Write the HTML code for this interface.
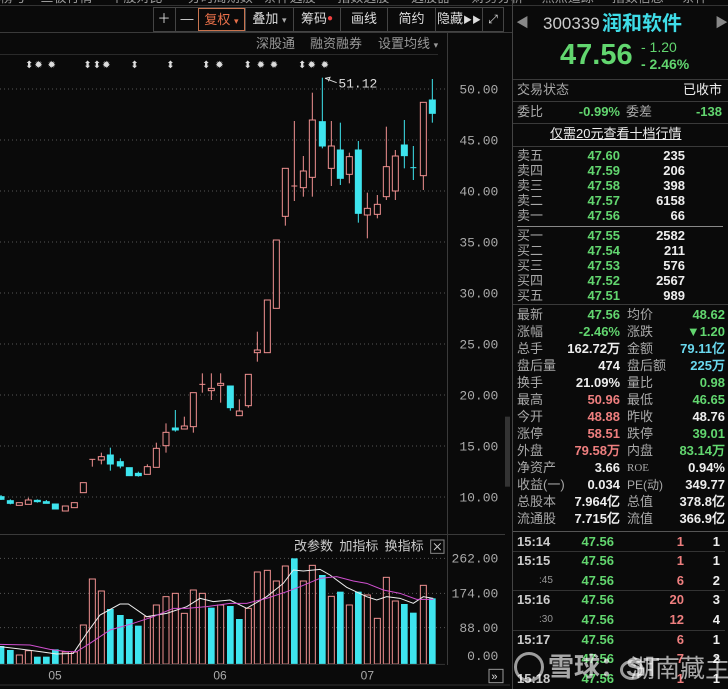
<!DOCTYPE html>
<html><head><meta charset="utf-8"><style>
*{margin:0;padding:0;box-sizing:border-box}
body{width:728px;height:689px;background:#0a0a0a;overflow:hidden;position:relative;font-family:"Liberation Sans","Noto Sans CJK SC",sans-serif;color:#ccc}
.a{position:absolute;white-space:nowrap;line-height:16px;height:16px}
.l{font-size:13px;color:#a8a8a8}
.n{font-size:13px;font-weight:bold;font-family:"Liberation Sans",sans-serif}
.g{color:#62d66f}.rd{color:#ef7f7f}.w{color:#eee}.cy{color:#6ad8ee}
.hl{position:absolute;height:1px;background:#3a3a3a}
.btn{position:absolute;top:8px;height:23px;line-height:22px;font-size:13px;color:#ddd;text-align:center;border-left:1px solid #444}
</style></head><body>
<!-- top cut menu -->
<div class="a" style="top:-10px;left:0;font-size:13px;color:#999">榜号 &nbsp;&nbsp; 三板行情 &nbsp;&nbsp;&nbsp; 个股对比 &nbsp;&nbsp;&nbsp;&nbsp;&nbsp; 分时周期数 &nbsp; 条件选股 &nbsp;&nbsp;&nbsp;&nbsp; 指数选股 &nbsp;&nbsp;&nbsp;&nbsp; 选股器 &nbsp;&nbsp;&nbsp;&nbsp; 财务分析 &nbsp;&nbsp;&nbsp; 热点追踪 &nbsp;&nbsp;&nbsp; 指数信息 &nbsp;&nbsp;&nbsp; 条件</div>
<div class="hl" style="top:5px;left:0;width:728px;background:#333"></div>
<!-- toolbar -->
<div style="position:absolute;left:153px;top:7px;width:351px;height:25px;border:1px solid #444"></div>
<div class="btn" style="left:153px;width:22px;border-left:none">＋</div>
<div class="btn" style="left:175px;width:23px">—</div>
<div class="btn" style="left:198px;width:47px;border:1px solid #c8744f;color:#e8704a">复权 <span style="font-size:9px">▾</span></div>
<div class="btn" style="left:245px;width:48px">叠加 <span style="font-size:9px;color:#aaa">▾</span></div>
<div class="btn" style="left:293px;width:47px">筹码<span style="color:#f04040;font-size:10px;vertical-align:top">●</span></div>
<div class="btn" style="left:340px;width:47px">画线</div>
<div class="btn" style="left:387px;width:48px">简约</div>
<div class="btn" style="left:435px;width:47px">隐藏<span style="font-size:9px">▶▶</span></div>
<div class="btn" style="left:482px;width:21px;font-size:12px">⤢</div>
<div class="hl" style="top:32px;left:0;width:512px"></div>
<div class="a l" style="top:36px;left:256px;color:#999">深股通</div>
<div class="a l" style="top:36px;left:310px;color:#999">融资融券</div>
<div class="a l" style="top:36px;left:378px;color:#999">设置均线 <span style="font-size:9px">▾</span></div>
<div class="hl" style="top:54px;left:0;width:438px;background:#2a2a2a"></div>
<div class="a" style="top:58px;left:25px;font-size:10px;color:#ddd;letter-spacing:1px">⬍✹ ✹ &nbsp;&nbsp;&nbsp;&nbsp;&nbsp;&nbsp;⬍⬍✹ &nbsp;&nbsp;&nbsp;&nbsp;⬍ &nbsp;&nbsp;&nbsp;&nbsp;&nbsp;&nbsp;⬍ &nbsp;&nbsp;&nbsp;&nbsp;&nbsp;&nbsp;⬍ ✹ &nbsp;&nbsp;&nbsp;&nbsp;⬍ ✹ ✹ &nbsp;&nbsp;&nbsp;&nbsp;⬍✹ ✹</div>
<!-- price chart -->
<svg style="position:absolute;left:0;top:60px" width="510" height="474" viewBox="0 0 1530 1422">
<g stroke="#555" stroke-width="3" stroke-dasharray="3 9">
<line x1="0" y1="87" x2="1335" y2="87"/><line x1="0" y1="240" x2="1335" y2="240"/><line x1="0" y1="393" x2="1335" y2="393"/><line x1="0" y1="546" x2="1335" y2="546"/><line x1="0" y1="699" x2="1335" y2="699"/><line x1="0" y1="852" x2="1335" y2="852"/><line x1="0" y1="1005" x2="1335" y2="1005"/><line x1="0" y1="1158" x2="1335" y2="1158"/><line x1="0" y1="1311" x2="1335" y2="1311"/>
</g>
<g fill="#aaa" font-size="39" font-family="Liberation Mono,monospace" text-anchor="end">
<text x="1495" y="100">50.00</text><text x="1495" y="253">45.00</text><text x="1495" y="406">40.00</text><text x="1495" y="559">35.00</text><text x="1495" y="712">30.00</text><text x="1495" y="865">25.00</text><text x="1495" y="1018">20.00</text><text x="1495" y="1171">15.00</text><text x="1495" y="1324">10.00</text>
</g>
<rect x="1515" y="1070" width="15" height="210" fill="#333"/>
<g stroke="#ddd" stroke-width="3" fill="none"><polyline points="975,55 1010,68"/><polyline points="975,55 990,52 985,64"/></g>
<text x="1015" y="83" fill="#ddd" font-size="39" font-family="Liberation Mono,monospace">51.12</text>
<g stroke="#3ee4ee" stroke-width="3" fill="#3ee4ee">
<line x1="3" y1="1305" x2="3" y2="1320"/><rect x="-6" y="1310" width="18" height="8"/>
<line x1="31" y1="1318" x2="31" y2="1333"/><rect x="22" y="1322" width="18" height="8"/>
<line x1="112" y1="1318" x2="112" y2="1328"/><rect x="103" y="1321" width="18" height="4"/>
<line x1="139" y1="1320" x2="139" y2="1330"/><rect x="130" y="1325" width="18" height="5"/>
<rect x="157" y="1332" width="18" height="15"/>
<line x1="331" y1="1163" x2="331" y2="1232"/><rect x="322" y="1185" width="18" height="27"/>
<line x1="361" y1="1195" x2="361" y2="1225"/><rect x="352" y="1205" width="18" height="13"/>
<rect x="379" y="1223" width="18" height="24"/>
<line x1="415" y1="1235" x2="415" y2="1250"/><rect x="406" y="1240" width="18" height="7"/>
<line x1="526" y1="1050" x2="526" y2="1115"/><rect x="517" y="1104" width="18" height="6"/>
<line x1="691" y1="978" x2="691" y2="1052"/><rect x="682" y="978" width="18" height="65"/>
<line x1="967" y1="53" x2="967" y2="265"/><rect x="958" y="185" width="18" height="73"/>
<line x1="1021" y1="188" x2="1021" y2="375"/><rect x="1012" y="270" width="18" height="85"/>
<line x1="1075" y1="243" x2="1075" y2="488"/><rect x="1066" y="270" width="18" height="190"/>
<line x1="1213" y1="180" x2="1213" y2="325"/><rect x="1204" y="255" width="18" height="32"/>
<line x1="1240" y1="258" x2="1240" y2="360"/><line x1="1231" y1="323" x2="1249" y2="323"/>
<line x1="1297" y1="57" x2="1297" y2="188"/><rect x="1288" y="120" width="18" height="40"/>
</g>
<g stroke="#f09090" stroke-width="3" fill="#0a0a0a">
<rect x="49" y="1328" width="18" height="8"/>
<line x1="85" y1="1313" x2="85" y2="1320"/><rect x="76" y="1320" width="18" height="13"/>
<rect x="187" y="1338" width="18" height="15"/>
<rect x="214" y="1328" width="18" height="15"/>
<rect x="241" y="1268" width="18" height="30"/>
<line x1="277" y1="1198" x2="277" y2="1220"/><line x1="268" y1="1198" x2="286" y2="1198"/>
<line x1="304" y1="1178" x2="304" y2="1213"/><rect x="295" y="1190" width="18" height="10"/>
<line x1="442" y1="1213" x2="442" y2="1220"/><rect x="433" y="1220" width="18" height="23"/>
<line x1="469" y1="1148" x2="469" y2="1165"/><rect x="460" y="1165" width="18" height="57"/>
<line x1="498" y1="1090" x2="498" y2="1178"/><rect x="489" y="1117" width="18" height="40"/>
<line x1="553" y1="1070" x2="553" y2="1108"/><rect x="544" y="1098" width="18" height="9"/>
<line x1="580" y1="1100" x2="580" y2="1118"/><rect x="571" y="998" width="18" height="102"/>
<line x1="607" y1="940" x2="607" y2="998"/><line x1="598" y1="973" x2="616" y2="973"/>
<line x1="634" y1="940" x2="634" y2="1020"/><rect x="625" y="985" width="18" height="7"/>
<line x1="662" y1="940" x2="662" y2="1028"/><rect x="653" y="970" width="18" height="6"/>
<line x1="718" y1="1018" x2="718" y2="1053"/><rect x="709" y="1053" width="18" height="14"/>
<line x1="745" y1="1037" x2="745" y2="1043"/><rect x="736" y="943" width="18" height="94"/>
<line x1="772" y1="815" x2="772" y2="905"/><rect x="763" y="870" width="18" height="8"/>
<rect x="793" y="720" width="18" height="158"/>
<rect x="820" y="540" width="18" height="205"/>
<line x1="856" y1="469" x2="856" y2="497"/><rect x="847" y="325" width="18" height="144"/>
<line x1="883" y1="183" x2="883" y2="423"/><line x1="874" y1="378" x2="892" y2="378"/>
<line x1="910" y1="288" x2="910" y2="410"/><rect x="901" y="333" width="18" height="50"/>
<line x1="937" y1="98" x2="937" y2="410"/><rect x="928" y="180" width="18" height="172"/>
<line x1="994" y1="183" x2="994" y2="378"/><rect x="985" y="258" width="18" height="67"/>
<line x1="1048" y1="278" x2="1048" y2="370"/><rect x="1039" y="290" width="18" height="53"/>
<line x1="1102" y1="398" x2="1102" y2="535"/><rect x="1093" y="445" width="18" height="20"/>
<line x1="1132" y1="405" x2="1132" y2="475"/><rect x="1123" y="433" width="18" height="30"/>
<line x1="1159" y1="200" x2="1159" y2="420"/><rect x="1150" y="320" width="18" height="90"/>
<line x1="1186" y1="270" x2="1186" y2="420"/><rect x="1177" y="288" width="18" height="105"/>
<line x1="1270" y1="347" x2="1270" y2="390"/><rect x="1261" y="127" width="18" height="220"/>
</g>
</svg>
<!-- vertical separators -->
<div style="position:absolute;left:447px;top:33px;width:1px;height:632px;background:#3a3a3a"></div>
<div class="hl" style="top:534px;left:0;width:505px"></div>
<!-- volume -->
<svg style="position:absolute;left:0;top:500px" width="510" height="189" viewBox="0 0 1530 567">
<g stroke="#555" stroke-width="3" stroke-dasharray="3 9">
<line x1="0" y1="175" x2="1335" y2="175"/><line x1="0" y1="280" x2="1335" y2="280"/><line x1="0" y1="383" x2="1335" y2="383"/>
</g>
<g fill="#aaa" font-size="39" font-family="Liberation Mono,monospace" text-anchor="end">
<text x="1495" y="188">262.00</text><text x="1495" y="293">174.00</text><text x="1495" y="396">88.00</text><text x="1495" y="480">0.00</text>
</g>
<g fill="#ccc" font-size="39" font-family="Liberation Sans,Noto Sans CJK SC,sans-serif">
<text x="882" y="152">改参数</text><text x="1018" y="152">加指标</text><text x="1154" y="152">换指标</text>
</g>
<rect x="1292" y="120" width="40" height="40" fill="none" stroke="#888" stroke-width="3"/>
<path d="M1302 130 L1322 150 M1322 130 L1302 150" stroke="#ccc" stroke-width="3"/>
<g fill="#3ee4ee">
<rect x="-7" y="438" width="20" height="54"/><rect x="21" y="450" width="20" height="42"/><rect x="102" y="470" width="20" height="22"/><rect x="129" y="470" width="20" height="22"/><rect x="156" y="448" width="20" height="44"/><rect x="321" y="327" width="20" height="165"/><rect x="351" y="345" width="20" height="147"/><rect x="378" y="357" width="20" height="135"/><rect x="405" y="377" width="20" height="115"/><rect x="624" y="323" width="20" height="169"/><rect x="681" y="318" width="20" height="174"/><rect x="708" y="357" width="20" height="135"/><rect x="873" y="175" width="20" height="317"/><rect x="957" y="225" width="20" height="267"/><rect x="1011" y="275" width="20" height="217"/><rect x="1065" y="275" width="20" height="217"/><rect x="1203" y="312" width="20" height="180"/><rect x="1230" y="338" width="20" height="154"/><rect x="1287" y="295" width="20" height="197"/>
</g>
<g fill="none" stroke="#f09090" stroke-width="3">
<rect x="49" y="465" width="18" height="27"/><rect x="76" y="452" width="18" height="40"/><rect x="187" y="456" width="18" height="36"/><rect x="214" y="456" width="18" height="36"/><rect x="241" y="375" width="18" height="117"/><rect x="268" y="237" width="18" height="255"/><rect x="295" y="273" width="18" height="219"/><rect x="433" y="350" width="18" height="142"/><rect x="460" y="315" width="18" height="177"/><rect x="489" y="290" width="18" height="202"/><rect x="517" y="280" width="18" height="212"/><rect x="544" y="340" width="18" height="152"/><rect x="571" y="270" width="18" height="222"/><rect x="598" y="280" width="18" height="212"/><rect x="653" y="315" width="18" height="177"/><rect x="736" y="325" width="18" height="167"/><rect x="763" y="216" width="18" height="276"/><rect x="793" y="211" width="18" height="281"/><rect x="820" y="243" width="18" height="249"/><rect x="847" y="198" width="18" height="294"/><rect x="901" y="243" width="18" height="249"/><rect x="928" y="196" width="18" height="296"/><rect x="985" y="289" width="18" height="203"/><rect x="1039" y="315" width="18" height="177"/><rect x="1093" y="285" width="18" height="207"/><rect x="1123" y="355" width="18" height="137"/><rect x="1150" y="232" width="18" height="260"/><rect x="1177" y="303" width="18" height="189"/><rect x="1261" y="256" width="18" height="236"/>
</g>
<polyline fill="none" stroke="#eee" stroke-width="3" points="0,440 60,447 120,455 170,462 220,460 260,400 300,345 360,312 385,312 440,350 500,340 560,320 600,295 640,305 690,300 740,325 800,290 850,250 880,210 910,213 960,208 990,225 1040,262 1100,290 1130,300 1160,290 1200,295 1240,310 1270,290 1300,295"/>
<polyline fill="none" stroke="#d050d0" stroke-width="3" points="0,433 90,435 150,448 200,455 230,455 270,430 330,390 400,370 460,350 520,325 560,325 620,320 690,310 740,310 800,295 860,275 900,260 960,235 1010,230 1060,243 1100,250 1150,270 1200,280 1250,298 1300,298"/>
<line x1="0" y1="493" x2="1335" y2="493" stroke="#333" stroke-width="3"/>
<line x1="0" y1="555" x2="1530" y2="555" stroke="#333" stroke-width="3"/>
<g fill="#aaa" font-size="36" font-family="Liberation Sans,sans-serif"><text x="145" y="538">05</text><text x="640" y="538">06</text><text x="1082" y="538">07</text></g>
<rect x="1467" y="508" width="42" height="40" fill="none" stroke="#999" stroke-width="3"/>
<text x="1474" y="540" fill="#ddd" font-size="33">»</text>
</svg>
<!-- right panel -->
<div style="position:absolute;left:512px;top:0;width:1px;height:689px;background:#444"></div>
<div class="a" style="top:15px;left:516px;color:#888;font-size:13px">◀</div>
<div class="a" style="top:14px;left:543px;font-size:17px;color:#ccc;height:20px;line-height:20px">300339</div>
<div class="a" style="top:12px;left:602px;font-size:20px;font-weight:bold;color:#3fdde8;height:24px;line-height:24px">润和软件</div>
<div class="a" style="top:15px;left:715px;color:#888;font-size:13px">▶</div>
<div class="a g" style="top:39px;left:560px;font-size:29px;height:32px;line-height:32px;font-weight:bold">47.56</div>
<div class="a g" style="top:39px;left:641px;font-size:14px">- 1.20</div>
<div class="a g" style="top:56px;left:641px;font-size:14px;font-weight:bold">- 2.46%</div>
<div class="hl" style="top:79px;left:513px;width:215px"></div>
<div class="a l" style="top:82px;left:517px">交易状态</div><div class="a w" style="top:82px;right:6px;font-size:13px">已收市</div>
<div class="hl" style="top:101px;left:513px;width:215px"></div>
<div class="a l" style="top:104px;left:517px">委比</div><div class="a n g" style="top:104px;right:108px">-0.99%</div><div class="a l" style="top:104px;left:626px">委差</div><div class="a n g" style="top:104px;right:6px">-138</div>
<div class="hl" style="top:123px;left:513px;width:215px"></div>
<div class="a w" style="top:126px;left:550px;font-size:13px;text-decoration:underline">仅需20元查看十档行情</div>
<div class="hl" style="top:146px;left:513px;width:215px"></div>
<div style="position:absolute;top:148px;left:517px;width:210px;font-size:13px">
<div class="a l" style="top:0">卖五</div><div class="a l" style="top:15px">卖四</div><div class="a l" style="top:30px">卖三</div><div class="a l" style="top:45px">卖二</div><div class="a l" style="top:60px">卖一</div>
<div class="a l" style="top:80px">买一</div><div class="a l" style="top:95px">买二</div><div class="a l" style="top:110px">买三</div><div class="a l" style="top:125px">买四</div><div class="a l" style="top:140px">买五</div>
</div>
<div style="position:absolute;top:148px;left:560px;width:60px">
<div class="a n g" style="top:0;right:0">47.60</div><div class="a n g" style="top:15px;right:0">47.59</div><div class="a n g" style="top:30px;right:0">47.58</div><div class="a n g" style="top:45px;right:0">47.57</div><div class="a n g" style="top:60px;right:0">47.56</div>
<div class="a n g" style="top:80px;right:0">47.55</div><div class="a n g" style="top:95px;right:0">47.54</div><div class="a n g" style="top:110px;right:0">47.53</div><div class="a n g" style="top:125px;right:0">47.52</div><div class="a n g" style="top:140px;right:0">47.51</div>
</div>
<div style="position:absolute;top:148px;left:630px;width:55px">
<div class="a n w" style="top:0;right:0">235</div><div class="a n w" style="top:15px;right:0">206</div><div class="a n w" style="top:30px;right:0">398</div><div class="a n w" style="top:45px;right:0">6158</div><div class="a n w" style="top:60px;right:0">66</div>
<div class="a n w" style="top:80px;right:0">2582</div><div class="a n w" style="top:95px;right:0">211</div><div class="a n w" style="top:110px;right:0">576</div><div class="a n w" style="top:125px;right:0">2567</div><div class="a n w" style="top:140px;right:0">989</div>
</div>
<div class="hl" style="top:226px;left:517px;width:206px;background:#888"></div>
<div class="hl" style="top:304px;left:513px;width:215px"></div>
<!-- stats -->
<div style="position:absolute;top:307px;left:517px;width:208px;height:225px">
<div class="a l" style="top:0">最新</div><div class="a n g" style="top:0;right:105px">47.56</div><div class="a l" style="top:0;left:110px">均价</div><div class="a n g" style="top:0;right:0">48.62</div>
<div class="a l" style="top:17px">涨幅</div><div class="a n g" style="top:17px;right:105px">-2.46%</div><div class="a l" style="top:17px;left:110px">涨跌</div><div class="a n g" style="top:17px;right:0">▼1.20</div>
<div class="a l" style="top:34px">总手</div><div class="a n w" style="top:34px;right:105px">162.72万</div><div class="a l" style="top:34px;left:110px">金额</div><div class="a n cy" style="top:34px;right:0">79.11亿</div>
<div class="a l" style="top:51px">盘后量</div><div class="a n w" style="top:51px;right:105px">474</div><div class="a l" style="top:51px;left:110px">盘后额</div><div class="a n cy" style="top:51px;right:0">225万</div>
<div class="a l" style="top:68px">换手</div><div class="a n w" style="top:68px;right:105px">21.09%</div><div class="a l" style="top:68px;left:110px">量比</div><div class="a n g" style="top:68px;right:0">0.98</div>
<div class="a l" style="top:85px">最高</div><div class="a n rd" style="top:85px;right:105px">50.96</div><div class="a l" style="top:85px;left:110px">最低</div><div class="a n g" style="top:85px;right:0">46.65</div>
<div class="a l" style="top:102px">今开</div><div class="a n rd" style="top:102px;right:105px">48.88</div><div class="a l" style="top:102px;left:110px">昨收</div><div class="a n w" style="top:102px;right:0">48.76</div>
<div class="a l" style="top:119px">涨停</div><div class="a n rd" style="top:119px;right:105px">58.51</div><div class="a l" style="top:119px;left:110px">跌停</div><div class="a n g" style="top:119px;right:0">39.01</div>
<div class="a l" style="top:136px">外盘</div><div class="a n rd" style="top:136px;right:105px">79.58万</div><div class="a l" style="top:136px;left:110px">内盘</div><div class="a n g" style="top:136px;right:0">83.14万</div>
<div class="a l" style="top:153px">净资产</div><div class="a n w" style="top:153px;right:105px">3.66</div><div class="a l" style="top:153px;left:110px;font-size:11px;font-family:'Liberation Serif',serif">ROE</div><div class="a n w" style="top:153px;right:0">0.94%</div>
<div class="a l" style="top:170px">收益(一)</div><div class="a n w" style="top:170px;right:105px">0.034</div><div class="a l" style="top:170px;left:110px;font-size:12px">PE(动)</div><div class="a n w" style="top:170px;right:0">349.77</div>
<div class="a l" style="top:187px">总股本</div><div class="a n w" style="top:187px;right:105px">7.964亿</div><div class="a l" style="top:187px;left:110px">总值</div><div class="a n w" style="top:187px;right:0">378.8亿</div>
<div class="a l" style="top:204px">流通股</div><div class="a n w" style="top:204px;right:105px">7.715亿</div><div class="a l" style="top:204px;left:110px">流值</div><div class="a n w" style="top:204px;right:0">366.9亿</div>
</div>
<div class="hl" style="top:531px;left:513px;width:215px;background:#555"></div>
<!-- ticks -->
<div style="position:absolute;top:534px;left:517px;width:208px;height:155px">
<div class="a n" style="top:0;color:#ccc">15:14</div><div class="a n g" style="top:0;right:111px">47.56</div><div class="a n rd" style="top:0;right:41px">1</div><div class="a n w" style="top:0;right:5px">1</div>
<div class="hl" style="top:17px;left:-4px;width:212px;background:#333"></div>
<div class="a n" style="top:19px;color:#ccc">15:15</div><div class="a n g" style="top:19px;right:111px">47.56</div><div class="a n rd" style="top:19px;right:41px">1</div><div class="a n w" style="top:19px;right:5px">1</div>
<div class="a" style="top:39px;left:22px;font-size:10px;color:#999">:45</div><div class="a n g" style="top:39px;right:111px">47.56</div><div class="a n rd" style="top:39px;right:41px">6</div><div class="a n w" style="top:39px;right:5px">2</div>
<div class="hl" style="top:56px;left:-4px;width:212px;background:#333"></div>
<div class="a n" style="top:58px;color:#ccc">15:16</div><div class="a n g" style="top:58px;right:111px">47.56</div><div class="a n rd" style="top:58px;right:41px">20</div><div class="a n w" style="top:58px;right:5px">3</div>
<div class="a" style="top:78px;left:22px;font-size:10px;color:#999">:30</div><div class="a n g" style="top:78px;right:111px">47.56</div><div class="a n rd" style="top:78px;right:41px">12</div><div class="a n w" style="top:78px;right:5px">4</div>
<div class="hl" style="top:96px;left:-4px;width:212px;background:#333"></div>
<div class="a n" style="top:98px;color:#ccc">15:17</div><div class="a n g" style="top:98px;right:111px">47.56</div><div class="a n rd" style="top:98px;right:41px">6</div><div class="a n w" style="top:98px;right:5px">1</div>
<div class="a n g" style="top:117px;right:111px">47.56</div><div class="a n rd" style="top:117px;right:41px">7</div><div class="a n w" style="top:117px;right:5px">2</div>
<div class="a n" style="top:137px;color:#ccc">15:18</div><div class="a n g" style="top:137px;right:111px">47.56</div><div class="a n rd" style="top:137px;right:41px">1</div><div class="a n w" style="top:137px;right:5px">1</div>
</div>
<!-- watermark -->
<div style="position:absolute;left:514px;top:652px;width:30px;height:30px;border:3px solid rgba(255,255,255,.6);border-radius:50%"></div>
<div class="a" style="top:650px;left:548px;font-size:26px;height:34px;line-height:34px;color:rgba(255,255,255,.65);font-weight:bold">雪球：ST</div>
<div style="position:absolute;left:620px;top:660px;width:24px;height:20px;border:3px solid rgba(255,255,255,.6);border-radius:50%"></div>
<div class="a" style="top:652px;left:630px;font-size:25px;height:34px;line-height:34px;color:rgba(255,255,255,.65)">湖南藏主</div>
</body></html>
